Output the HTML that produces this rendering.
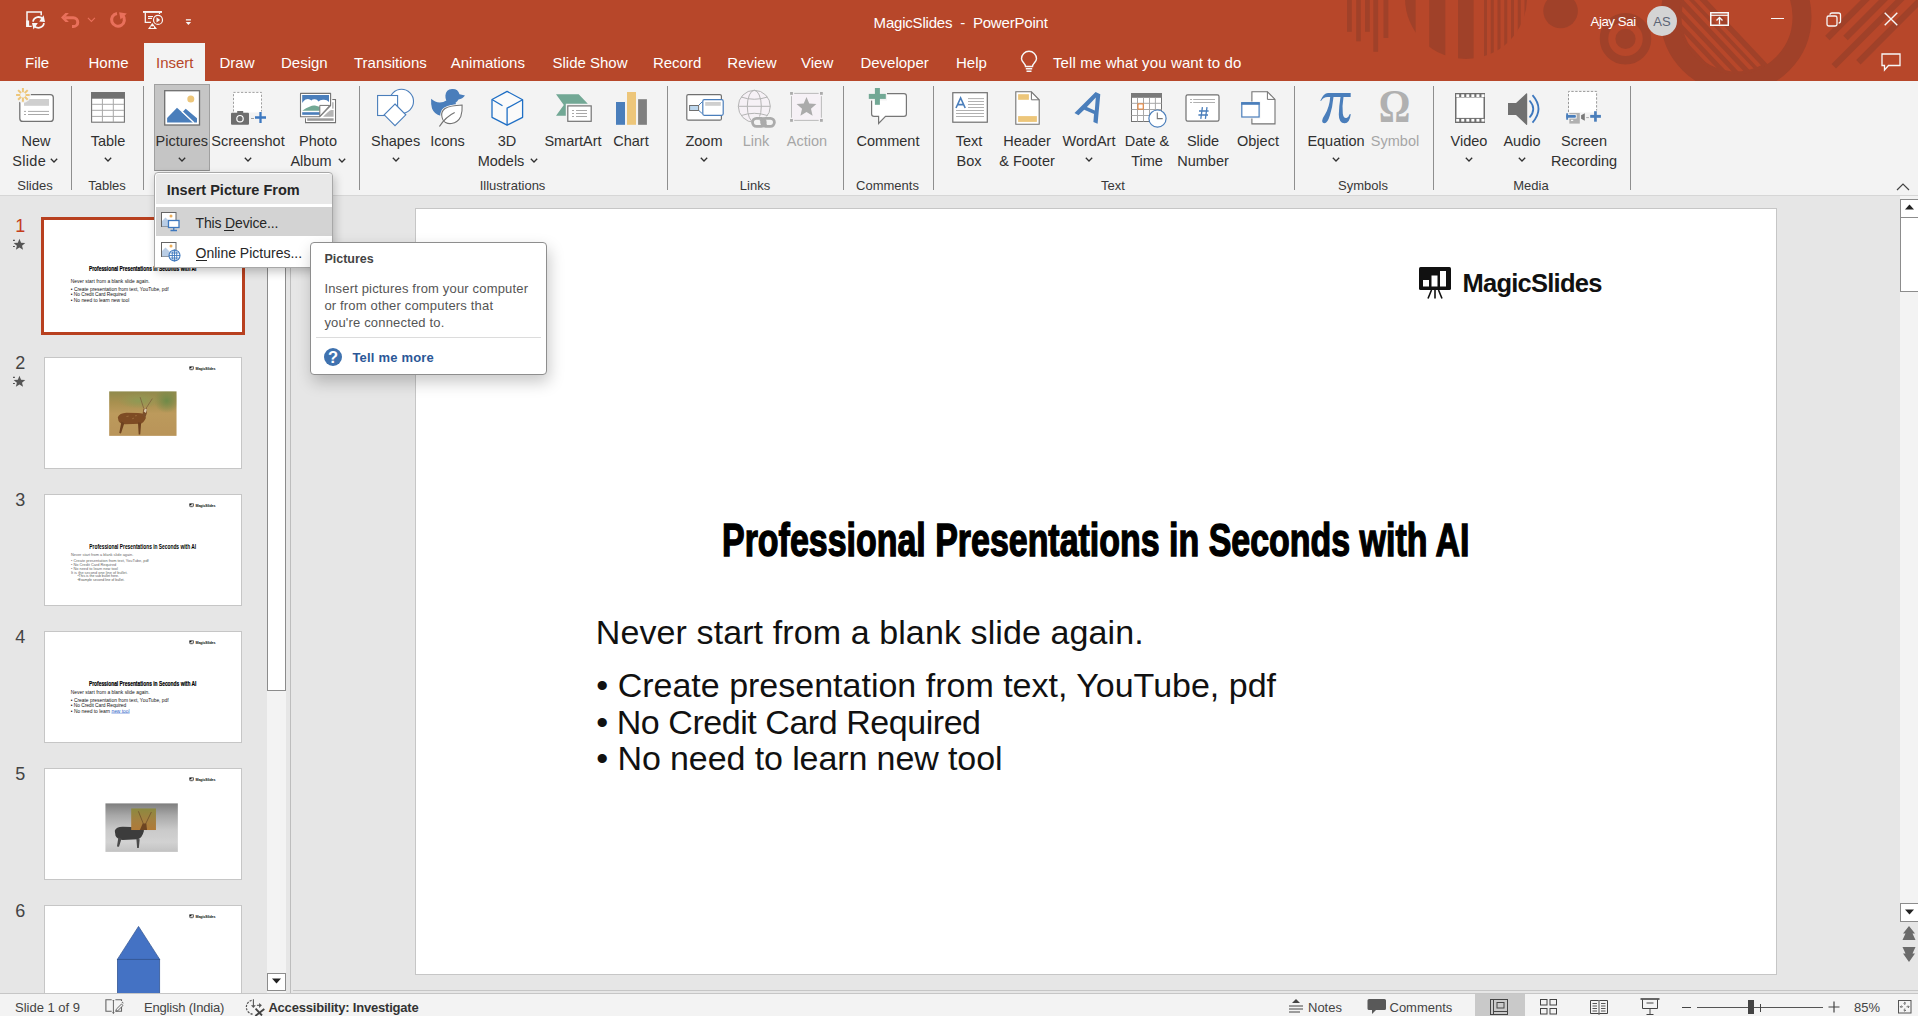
<!DOCTYPE html>
<html><head><meta charset="utf-8"><title>MagicSlides - PowerPoint</title>
<style>
html,body{margin:0;padding:0;}
body{width:1918px;height:1016px;overflow:hidden;position:relative;background:#E6E6E6;font-family:"Liberation Sans", sans-serif;}
.t{position:absolute;white-space:nowrap;}
.r{position:absolute;}
.s{position:absolute;overflow:visible;}
</style></head><body>

<div class="r" style="left:0px;top:0px;width:1918px;height:81px;background:#B7472A;"></div>
<svg class="s" style="left:0px;top:0px;overflow:hidden;" width="1918" height="81" viewBox="0 0 1918 81"><g fill="#A04129"><rect x="1347" y="0" width="4.8" height="31.8"/><rect x="1356.2" y="0" width="4.6" height="41.3"/><rect x="1365" y="0" width="4.8" height="31.8"/><rect x="1373.3" y="0" width="4.8" height="51.8"/><rect x="1383.5" y="0" width="4.8" height="38"/><clipPath id="hd"><circle cx="1466" cy="-2" r="61"/></clipPath><g clip-path="url(#hd)"><rect x="1400" y="0" width="15.6" height="70"/><rect x="1429.2" y="0" width="16.1" height="70"/><rect x="1458" y="0" width="15.6" height="70"/><rect x="1484.00" y="0" width="3" height="70"/><rect x="1490.75" y="0" width="3" height="70"/><rect x="1497.50" y="0" width="3" height="70"/><rect x="1504.25" y="0" width="3" height="70"/><rect x="1511.00" y="0" width="3" height="70"/><rect x="1517.75" y="0" width="3" height="70"/><rect x="1524.50" y="0" width="3" height="70"/><rect x="1531.25" y="0" width="3" height="70"/></g><circle cx="1560.6" cy="11" r="17.3"/><circle cx="1625.5" cy="38.8" r="21.5" fill="none" stroke="#A04129" stroke-width="8.5"/><circle cx="1625.5" cy="38.8" r="10.1"/><circle cx="1736" cy="17" r="66" fill="none" stroke="#A04129" stroke-width="19"/><clipPath id="rc"><circle cx="1736" cy="17" r="57"/></clipPath><clipPath id="rc2"><circle cx="1736" cy="17" r="54.5"/></clipPath><g clip-path="url(#rc)"><polygon points="1600,-10 1697.6,-10 1784.4,82 1600,82"/></g><g clip-path="url(#rc2)" fill="#B7472A"><polygon points="1684.6,-10 1690.1,-10 1793.8,100 1788.3,100"/><polygon points="1674.1,-10 1679.6,-10 1783.3,100 1777.8,100"/><polygon points="1661.6,-10 1667.1,-10 1770.8,100 1765.3,100"/><polygon points="1649.6,-10 1655.1,-10 1758.8,100 1753.3,100"/><polygon points="1637.6,-10 1643.1,-10 1746.8,100 1741.3,100"/></g><line x1="1827.4" y1="37.9" x2="1947.4" y2="-82.1" stroke="#A04129" stroke-width="6.3"/><line x1="1845.5" y1="37.9" x2="1965.5" y2="-82.1" stroke="#A04129" stroke-width="6.3"/><line x1="1833.8" y1="66.2" x2="1953.8" y2="-53.8" stroke="#A04129" stroke-width="6.3"/><line x1="1858.4" y1="62.2" x2="1978.4" y2="-57.8" stroke="#A04129" stroke-width="6.3"/></g></svg>
<svg class="s" style="left:0px;top:0px;" width="200" height="40" viewBox="0 0 200 40"><path d="M27 26.2 V12 H41.2 V15.3" fill="none" stroke="#F7F7F7" stroke-width="1.5"/><rect x="26.2" y="20.5" width="2.9" height="6.4" fill="#F7F7F7"/><rect x="26.2" y="25.7" width="5.5" height="1.3" fill="#F7F7F7"/><path d="M33 21.6 A5.6 5.6 0 0 1 43.2 19.6" fill="none" stroke="#F7F7F7" stroke-width="1.8"/><path d="M43.6 15.2 L45 21.9 L39.2 21.6 Z" fill="#F7F7F7"/><path d="M44 23.2 A5.6 5.6 0 0 1 33.8 25.2" fill="none" stroke="#F7F7F7" stroke-width="1.8"/><path d="M32 23.1 L37.8 23.1 L33.5 29.6 Z" fill="#F7F7F7"/><path d="M61 17.6 L65.4 13.1 H68.9 L64.6 17.6 L68.9 22.0 H65.4 Z" fill="#E9705B"/><path d="M65 17.7 H73.3 A4.45 4.45 0 0 1 73.3 26.6 H72" fill="none" stroke="#E9705B" stroke-width="3"/><path d="M87.9 17.9 L91.4 21.4 L94.9 17.9" fill="none" stroke="#E9705B" stroke-width="1.1"/><path d="M117 13.5 A6.4 6.4 0 1 0 122.6 15.4" fill="none" stroke="#E9705B" stroke-width="3.1"/><path d="M119.1 12.2 L126.8 13.6 L120.5 19.4 Z" fill="#E9705B"/><rect x="143" y="11" width="19" height="1.9" fill="#F7F7F7"/><path d="M145.3 12.5 V22.3 H151" fill="none" stroke="#F7F7F7" stroke-width="1.3"/><path d="M159.5 12.5 V14" stroke="#F7F7F7" stroke-width="1.2"/><path d="M148 16.5 H153 M148 18.4 H152" stroke="#F7F7F7" stroke-width="1.2"/><circle cx="158" cy="19.9" r="4.5" fill="#B7472A" stroke="#F7F7F7" stroke-width="1.2"/><path d="M156.5 17.2 L160.2 19.9 L156.5 22.6 Z" fill="#F7F7F7"/><path d="M152.3 23 L148 28.9 H157 Z" fill="#F7F7F7"/><path d="M150.6 26.3 H154 V28 H150.6 Z" fill="#B7472A"/><rect x="185.9" y="19.2" width="5" height="1.3" fill="#F7F7F7"/><path d="M185.7 22.1 H191.1 L188.4 25 Z" fill="#F7F7F7"/></svg>
<div class="t" style="font-size:15px;line-height:15px;color:#FFFFFF;font-weight:400;font-family:'Liberation Sans', sans-serif;top:14.70px;left:873.6px;white-space:pre;letter-spacing:-0.2px;">MagicSlides  -  PowerPoint</div>
<div class="t" style="font-size:13.2px;line-height:13.2px;color:#FFFFFF;font-weight:400;font-family:'Liberation Sans', sans-serif;top:14.63px;left:1590.5px;letter-spacing:-0.4px;">Ajay Sai</div>
<div class="r" style="left:1647px;top:6px;width:30px;height:30px;border-radius:50%;background:#D4D4D4;"></div>
<div class="t" style="font-size:13px;line-height:13px;color:#5C6475;font-weight:400;font-family:'Liberation Sans', sans-serif;top:15.00px;left:1362px;width:600px;text-align:center;">AS</div>
<svg class="s" style="left:1710px;top:12px;" width="19" height="14" viewBox="0 0 19 14">
<rect x="0.75" y="0.75" width="17.5" height="12.5" fill="none" stroke="#F7F7F7" stroke-width="1.5"/>
<path d="M0.75 3.3 H18.25" stroke="#F7F7F7" stroke-width="1.2"/>
<path d="M9.5 12.5 V5.5 M6.5 8.5 L9.5 5.5 L12.5 8.5" fill="none" stroke="#F7F7F7" stroke-width="1.3"/>
</svg>
<div class="r" style="left:1771px;top:17.5px;width:13px;height:1.3px;background:#F7F7F7;"></div>
<svg class="s" style="left:1826px;top:12px;" width="16" height="15" viewBox="0 0 16 15">
<rect x="1" y="4" width="10" height="10" rx="1.8" fill="none" stroke="#F7F7F7" stroke-width="1.3"/>
<path d="M4 2.8 Q4 1 6 1 H12.5 Q14.5 1 14.5 3 V9 Q14.5 11 12.6 11" fill="none" stroke="#F7F7F7" stroke-width="1.3"/>
</svg>
<svg class="s" style="left:1884px;top:12px;" width="14" height="14" viewBox="0 0 14 14"><path d="M0.7 0.7 L13.3 13.3 M13.3 0.7 L0.7 13.3" stroke="#F7F7F7" stroke-width="1.4"/></svg>
<svg class="s" style="left:1881px;top:53px;" width="20" height="19" viewBox="0 0 20 19"><path d="M1 1 H19 V12.5 H7.5 L3.5 17 V12.5 H1 Z" fill="none" stroke="#F7F7F7" stroke-width="1.3" stroke-linejoin="miter"/></svg>
<div class="r" style="left:144px;top:43px;width:61px;height:38px;background:#F3F3F3;"></div>
<div class="t" style="font-size:15px;line-height:15px;color:#FFFFFF;font-weight:400;font-family:'Liberation Sans', sans-serif;top:55.30px;left:25px;">File</div>
<div class="t" style="font-size:15px;line-height:15px;color:#FFFFFF;font-weight:400;font-family:'Liberation Sans', sans-serif;top:55.30px;left:88.5px;">Home</div>
<div class="t" style="font-size:15px;line-height:15px;color:#B7472A;font-weight:400;font-family:'Liberation Sans', sans-serif;top:55.30px;left:156px;">Insert</div>
<div class="t" style="font-size:15px;line-height:15px;color:#FFFFFF;font-weight:400;font-family:'Liberation Sans', sans-serif;top:55.30px;left:219.5px;">Draw</div>
<div class="t" style="font-size:15px;line-height:15px;color:#FFFFFF;font-weight:400;font-family:'Liberation Sans', sans-serif;top:55.30px;left:281px;">Design</div>
<div class="t" style="font-size:15px;line-height:15px;color:#FFFFFF;font-weight:400;font-family:'Liberation Sans', sans-serif;top:55.30px;left:354px;">Transitions</div>
<div class="t" style="font-size:15px;line-height:15px;color:#FFFFFF;font-weight:400;font-family:'Liberation Sans', sans-serif;top:55.30px;left:450.75px;">Animations</div>
<div class="t" style="font-size:15px;line-height:15px;color:#FFFFFF;font-weight:400;font-family:'Liberation Sans', sans-serif;top:55.30px;left:552.5px;">Slide Show</div>
<div class="t" style="font-size:15px;line-height:15px;color:#FFFFFF;font-weight:400;font-family:'Liberation Sans', sans-serif;top:55.30px;left:652.9px;">Record</div>
<div class="t" style="font-size:15px;line-height:15px;color:#FFFFFF;font-weight:400;font-family:'Liberation Sans', sans-serif;top:55.30px;left:727.3px;">Review</div>
<div class="t" style="font-size:15px;line-height:15px;color:#FFFFFF;font-weight:400;font-family:'Liberation Sans', sans-serif;top:55.30px;left:801px;">View</div>
<div class="t" style="font-size:15px;line-height:15px;color:#FFFFFF;font-weight:400;font-family:'Liberation Sans', sans-serif;top:55.30px;left:860.4px;">Developer</div>
<div class="t" style="font-size:15px;line-height:15px;color:#FFFFFF;font-weight:400;font-family:'Liberation Sans', sans-serif;top:55.30px;left:956px;">Help</div>
<svg class="s" style="left:1020px;top:52.3px;" width="18" height="22" viewBox="0 0 18 22">
<path d="M5.5 14.5 C5.5 11.5 1.5 10 1.5 6.8 A7.5 7.5 0 0 1 16.5 6.8 C16.5 10 12.5 11.5 12.5 14.5 Z" fill="none" stroke="#F7F7F7" stroke-width="1.4"/>
<path d="M5.8 16.8 H12.2 M6.5 19.3 H11.5" stroke="#F7F7F7" stroke-width="1.4"/>
</svg>
<div class="t" style="font-size:15px;line-height:15px;color:#FFFFFF;font-weight:400;font-family:'Liberation Sans', sans-serif;top:54.50px;left:1053px;letter-spacing:0.12px;">Tell me what you want to do</div>
<div class="r" style="left:0px;top:81px;width:1918px;height:114px;background:#F3F3F3;"></div>
<div class="r" style="left:0px;top:195px;width:1918px;height:1px;background:#D6D6D6;"></div>
<div class="r" style="left:71px;top:86px;width:1px;height:104px;background:#8E8E8E;"></div>
<div class="r" style="left:143px;top:86px;width:1px;height:104px;background:#8E8E8E;"></div>
<div class="r" style="left:359px;top:86px;width:1px;height:104px;background:#8E8E8E;"></div>
<div class="r" style="left:667px;top:86px;width:1px;height:104px;background:#8E8E8E;"></div>
<div class="r" style="left:843px;top:86px;width:1px;height:104px;background:#8E8E8E;"></div>
<div class="r" style="left:933px;top:86px;width:1px;height:104px;background:#8E8E8E;"></div>
<div class="r" style="left:1294px;top:86px;width:1px;height:104px;background:#8E8E8E;"></div>
<div class="r" style="left:1433px;top:86px;width:1px;height:104px;background:#8E8E8E;"></div>
<div class="r" style="left:1630px;top:86px;width:1px;height:104px;background:#8E8E8E;"></div>
<div class="r" style="left:154px;top:84px;width:56px;height:87px;background:#C5C5C5;box-sizing:border-box;border:1px solid #A0A0A0;border-bottom-color:#8C8C8C;"></div>
<div class="t" style="font-size:14.5px;line-height:14.5px;color:#303030;font-weight:400;font-family:'Liberation Sans', sans-serif;top:134.03px;left:-264px;width:600px;text-align:center;">New</div>
<div class="t" style="font-size:14.5px;line-height:14.5px;color:#303030;font-weight:400;font-family:'Liberation Sans', sans-serif;top:153.73px;left:-270.8px;width:600px;text-align:center;letter-spacing:0.3px;">Slide</div>
<svg class="s" style="left:49.5px;top:157.7px;" width="8" height="5" viewBox="0 0 8 5"><path d="M0.8 0.8 L4 4 L7.2 0.8" fill="none" stroke="#303030" stroke-width="1.3"/></svg>
<div class="t" style="font-size:13px;line-height:13px;color:#383838;font-weight:400;font-family:'Liberation Sans', sans-serif;top:178.70px;left:-265px;width:600px;text-align:center;">Slides</div>
<div class="t" style="font-size:14.5px;line-height:14.5px;color:#303030;font-weight:400;font-family:'Liberation Sans', sans-serif;top:134.03px;left:-192px;width:600px;text-align:center;">Table</div>
<svg class="s" style="left:104px;top:157.0px;" width="8" height="5" viewBox="0 0 8 5"><path d="M0.8 0.8 L4 4 L7.2 0.8" fill="none" stroke="#303030" stroke-width="1.3"/></svg>
<div class="t" style="font-size:13px;line-height:13px;color:#383838;font-weight:400;font-family:'Liberation Sans', sans-serif;top:178.70px;left:-193px;width:600px;text-align:center;">Tables</div>
<div class="t" style="font-size:14.5px;line-height:14.5px;color:#303030;font-weight:400;font-family:'Liberation Sans', sans-serif;top:134.03px;left:-118.19999999999999px;width:600px;text-align:center;">Pictures</div>
<svg class="s" style="left:177.8px;top:157.0px;" width="8" height="5" viewBox="0 0 8 5"><path d="M0.8 0.8 L4 4 L7.2 0.8" fill="none" stroke="#303030" stroke-width="1.3"/></svg>
<div class="t" style="font-size:14.5px;line-height:14.5px;color:#303030;font-weight:400;font-family:'Liberation Sans', sans-serif;top:134.03px;left:-52px;width:600px;text-align:center;">Screenshot</div>
<svg class="s" style="left:244px;top:157.0px;" width="8" height="5" viewBox="0 0 8 5"><path d="M0.8 0.8 L4 4 L7.2 0.8" fill="none" stroke="#303030" stroke-width="1.3"/></svg>
<div class="t" style="font-size:14.5px;line-height:14.5px;color:#303030;font-weight:400;font-family:'Liberation Sans', sans-serif;top:134.03px;left:18px;width:600px;text-align:center;">Photo</div>
<div class="t" style="font-size:14.5px;line-height:14.5px;color:#303030;font-weight:400;font-family:'Liberation Sans', sans-serif;top:153.73px;left:11px;width:600px;text-align:center;">Album</div>
<svg class="s" style="left:337.5px;top:157.7px;" width="8" height="5" viewBox="0 0 8 5"><path d="M0.8 0.8 L4 4 L7.2 0.8" fill="none" stroke="#303030" stroke-width="1.3"/></svg>
<div class="t" style="font-size:14.5px;line-height:14.5px;color:#303030;font-weight:400;font-family:'Liberation Sans', sans-serif;top:134.03px;left:95.60000000000002px;width:600px;text-align:center;">Shapes</div>
<svg class="s" style="left:391.6px;top:157.0px;" width="8" height="5" viewBox="0 0 8 5"><path d="M0.8 0.8 L4 4 L7.2 0.8" fill="none" stroke="#303030" stroke-width="1.3"/></svg>
<div class="t" style="font-size:14.5px;line-height:14.5px;color:#303030;font-weight:400;font-family:'Liberation Sans', sans-serif;top:134.03px;left:147.5px;width:600px;text-align:center;">Icons</div>
<div class="t" style="font-size:14.5px;line-height:14.5px;color:#303030;font-weight:400;font-family:'Liberation Sans', sans-serif;top:134.03px;left:207px;width:600px;text-align:center;">3D</div>
<div class="t" style="font-size:14.5px;line-height:14.5px;color:#303030;font-weight:400;font-family:'Liberation Sans', sans-serif;top:153.73px;left:201px;width:600px;text-align:center;">Models</div>
<svg class="s" style="left:529.5px;top:157.7px;" width="8" height="5" viewBox="0 0 8 5"><path d="M0.8 0.8 L4 4 L7.2 0.8" fill="none" stroke="#303030" stroke-width="1.3"/></svg>
<div class="t" style="font-size:14.5px;line-height:14.5px;color:#303030;font-weight:400;font-family:'Liberation Sans', sans-serif;top:134.03px;left:273px;width:600px;text-align:center;">SmartArt</div>
<div class="t" style="font-size:14.5px;line-height:14.5px;color:#303030;font-weight:400;font-family:'Liberation Sans', sans-serif;top:134.03px;left:331px;width:600px;text-align:center;">Chart</div>
<div class="t" style="font-size:13px;line-height:13px;color:#383838;font-weight:400;font-family:'Liberation Sans', sans-serif;top:178.70px;left:212.5px;width:600px;text-align:center;">Illustrations</div>
<div class="t" style="font-size:14.5px;line-height:14.5px;color:#303030;font-weight:400;font-family:'Liberation Sans', sans-serif;top:134.03px;left:404px;width:600px;text-align:center;">Zoom</div>
<svg class="s" style="left:700px;top:157.0px;" width="8" height="5" viewBox="0 0 8 5"><path d="M0.8 0.8 L4 4 L7.2 0.8" fill="none" stroke="#303030" stroke-width="1.3"/></svg>
<div class="t" style="font-size:14.5px;line-height:14.5px;color:#A6A6A6;font-weight:400;font-family:'Liberation Sans', sans-serif;top:134.03px;left:456px;width:600px;text-align:center;">Link</div>
<div class="t" style="font-size:14.5px;line-height:14.5px;color:#A6A6A6;font-weight:400;font-family:'Liberation Sans', sans-serif;top:134.03px;left:507px;width:600px;text-align:center;">Action</div>
<div class="t" style="font-size:13px;line-height:13px;color:#383838;font-weight:400;font-family:'Liberation Sans', sans-serif;top:178.70px;left:455px;width:600px;text-align:center;">Links</div>
<div class="t" style="font-size:14.5px;line-height:14.5px;color:#303030;font-weight:400;font-family:'Liberation Sans', sans-serif;top:134.03px;left:588px;width:600px;text-align:center;">Comment</div>
<div class="t" style="font-size:13px;line-height:13px;color:#383838;font-weight:400;font-family:'Liberation Sans', sans-serif;top:178.70px;left:587.5px;width:600px;text-align:center;">Comments</div>
<div class="t" style="font-size:14.5px;line-height:14.5px;color:#303030;font-weight:400;font-family:'Liberation Sans', sans-serif;top:134.03px;left:669px;width:600px;text-align:center;">Text</div>
<div class="t" style="font-size:14.5px;line-height:14.5px;color:#303030;font-weight:400;font-family:'Liberation Sans', sans-serif;top:153.73px;left:669px;width:600px;text-align:center;">Box</div>
<div class="t" style="font-size:14.5px;line-height:14.5px;color:#303030;font-weight:400;font-family:'Liberation Sans', sans-serif;top:134.03px;left:727px;width:600px;text-align:center;">Header</div>
<div class="t" style="font-size:14.5px;line-height:14.5px;color:#303030;font-weight:400;font-family:'Liberation Sans', sans-serif;top:153.73px;left:727px;width:600px;text-align:center;">&amp; Footer</div>
<div class="t" style="font-size:14.5px;line-height:14.5px;color:#303030;font-weight:400;font-family:'Liberation Sans', sans-serif;top:134.03px;left:789px;width:600px;text-align:center;">WordArt</div>
<svg class="s" style="left:1085px;top:157.0px;" width="8" height="5" viewBox="0 0 8 5"><path d="M0.8 0.8 L4 4 L7.2 0.8" fill="none" stroke="#303030" stroke-width="1.3"/></svg>
<div class="t" style="font-size:14.5px;line-height:14.5px;color:#303030;font-weight:400;font-family:'Liberation Sans', sans-serif;top:134.03px;left:847px;width:600px;text-align:center;">Date &amp;</div>
<div class="t" style="font-size:14.5px;line-height:14.5px;color:#303030;font-weight:400;font-family:'Liberation Sans', sans-serif;top:153.73px;left:847px;width:600px;text-align:center;">Time</div>
<div class="t" style="font-size:14.5px;line-height:14.5px;color:#303030;font-weight:400;font-family:'Liberation Sans', sans-serif;top:134.03px;left:903px;width:600px;text-align:center;">Slide</div>
<div class="t" style="font-size:14.5px;line-height:14.5px;color:#303030;font-weight:400;font-family:'Liberation Sans', sans-serif;top:153.73px;left:903px;width:600px;text-align:center;">Number</div>
<div class="t" style="font-size:14.5px;line-height:14.5px;color:#303030;font-weight:400;font-family:'Liberation Sans', sans-serif;top:134.03px;left:958px;width:600px;text-align:center;">Object</div>
<div class="t" style="font-size:13px;line-height:13px;color:#383838;font-weight:400;font-family:'Liberation Sans', sans-serif;top:178.70px;left:813px;width:600px;text-align:center;">Text</div>
<div class="t" style="font-size:14.5px;line-height:14.5px;color:#303030;font-weight:400;font-family:'Liberation Sans', sans-serif;top:134.03px;left:1036px;width:600px;text-align:center;">Equation</div>
<svg class="s" style="left:1332px;top:157.0px;" width="8" height="5" viewBox="0 0 8 5"><path d="M0.8 0.8 L4 4 L7.2 0.8" fill="none" stroke="#303030" stroke-width="1.3"/></svg>
<div class="t" style="font-size:14.5px;line-height:14.5px;color:#A6A6A6;font-weight:400;font-family:'Liberation Sans', sans-serif;top:134.03px;left:1095px;width:600px;text-align:center;">Symbol</div>
<div class="t" style="font-size:13px;line-height:13px;color:#383838;font-weight:400;font-family:'Liberation Sans', sans-serif;top:178.70px;left:1063px;width:600px;text-align:center;">Symbols</div>
<div class="t" style="font-size:14.5px;line-height:14.5px;color:#303030;font-weight:400;font-family:'Liberation Sans', sans-serif;top:134.03px;left:1169px;width:600px;text-align:center;">Video</div>
<svg class="s" style="left:1465px;top:157.0px;" width="8" height="5" viewBox="0 0 8 5"><path d="M0.8 0.8 L4 4 L7.2 0.8" fill="none" stroke="#303030" stroke-width="1.3"/></svg>
<div class="t" style="font-size:14.5px;line-height:14.5px;color:#303030;font-weight:400;font-family:'Liberation Sans', sans-serif;top:134.03px;left:1222px;width:600px;text-align:center;">Audio</div>
<svg class="s" style="left:1518px;top:157.0px;" width="8" height="5" viewBox="0 0 8 5"><path d="M0.8 0.8 L4 4 L7.2 0.8" fill="none" stroke="#303030" stroke-width="1.3"/></svg>
<div class="t" style="font-size:14.5px;line-height:14.5px;color:#303030;font-weight:400;font-family:'Liberation Sans', sans-serif;top:134.03px;left:1284px;width:600px;text-align:center;">Screen</div>
<div class="t" style="font-size:14.5px;line-height:14.5px;color:#303030;font-weight:400;font-family:'Liberation Sans', sans-serif;top:153.73px;left:1284px;width:600px;text-align:center;">Recording</div>
<div class="t" style="font-size:13px;line-height:13px;color:#383838;font-weight:400;font-family:'Liberation Sans', sans-serif;top:178.70px;left:1231px;width:600px;text-align:center;">Media</div>
<svg class="s" style="left:1896px;top:183px;" width="14" height="8" viewBox="0 0 14 8"><path d="M1 7 L7 1 L13 7" fill="none" stroke="#444" stroke-width="1.2"/></svg>
<svg class="s" style="left:0px;top:0px;pointer-events:none;" width="1918" height="200" viewBox="0 0 1918 200"><rect x="19.8" y="94.6" width="33.5" height="26.8" rx="3" fill="#fff" stroke="#737373" stroke-width="1.3"/><rect x="24" y="99" width="25" height="6.8" fill="#CFCFCF"/><path d="M24 111.4 H26 M28 111.4 H49 M24 114.5 H26 M28 114.5 H49" stroke="#A8A8A8" stroke-width="1"/><circle cx="22.9" cy="94.9" r="8" fill="#F3F3F3"/><path d="M25.50 94.90 L29.70 94.90 M24.74 96.74 L27.71 99.71 M22.90 97.50 L22.90 101.70 M21.06 96.74 L18.09 99.71 M20.30 94.90 L16.10 94.90 M21.06 93.06 L18.09 90.09 M22.90 92.30 L22.90 88.10 M24.74 93.06 L27.71 90.09 " stroke="#EDC67A" stroke-width="2"/><rect x="91.6" y="92.6" width="32.8" height="29.6" fill="#fff" stroke="#737373" stroke-width="1.1"/><rect x="91.1" y="92.1" width="33.8" height="6.6" fill="#707070"/><path d="M102.4 98.7 V122 M113.3 98.7 V122 M92 104.3 H124 M92 110.3 H124 M92 116.4 H124" stroke="#A8A8A8" stroke-width="1"/><rect x="164.7" y="90.7" width="34.8" height="34.3" fill="#fff" stroke="#6E6E6E" stroke-width="1.3"/><circle cx="190.8" cy="98.9" r="3.5" fill="#EDC67A"/><path d="M167.1 122.6 V118 L177 107.8 L193.1 122.6 Z" fill="#4A7EBB"/><path d="M182.6 112 L185.7 108.8 L197 118.2 V122.6 H193.4 Z" fill="#4A7EBB"/><path d="M182 111.5 L194 122.8" stroke="#fff" stroke-width="1.2"/><rect x="233.5" y="92.4" width="28" height="20" fill="#fff"/><path d="M233.5 111.5 V92.4 H261.5 V111.5" fill="none" stroke="#A0A0A0" stroke-width="1" stroke-dasharray="2.2 1.6"/><rect x="231" y="112.7" width="18" height="12" rx="1" fill="#6E6E6E"/><rect x="237.2" y="111" width="6" height="3" fill="#6E6E6E"/><circle cx="240" cy="118.7" r="3.2" fill="none" stroke="#fff" stroke-width="1.2"/><path d="M251 118.5 H254" stroke="#A0A0A0" stroke-width="1"/><path d="M255 117.5 H266 M260.5 112 V123" stroke="#3D78C0" stroke-width="2.3"/><path d="M305.55 118.3 V122.6 H335.5 V99.6 H332.3" fill="#fff" stroke="#737373" stroke-width="1.1"/><rect x="306.1" y="100.2" width="28.8" height="21.8" fill="#fff"/><rect x="307.2" y="118.3" width="26.4" height="2.5" fill="#9A9A9A"/><path d="M323 116.7 L328 112 Q330 110.1 331.5 110.1 H333.6 V116.7 Z" fill="#B4B4B4"/><rect x="332.1" y="102.2" width="1.5" height="6.4" fill="#B4B4B4"/><path d="M300.5 93.4 H330.6 V105.6 L319.8 116.7 H300.5 Z" fill="#fff" stroke="#737373" stroke-width="1.1" stroke-linejoin="round"/><path d="M302.2 95.1 H329 V102 Q327 99.8 324 99.8 Q320 99.5 318.5 101.5 Q317 99 314.5 99.2 Q312 99.3 311.5 100.5 Q309 98 305.5 99.5 Q303.5 100.5 302.2 103 Z" fill="#4A7EBB"/><path d="M302.2 110.7 Q306 107.8 310 106.5 Q312.5 105.2 315 105.6 Q318 106.3 319.8 107 V110.7 Z" fill="#72A895"/><rect x="302.2" y="112.2" width="17.6" height="2.6" fill="#4A7EBB"/><path d="M319.8 116.2 V105.4 H329.8 Z" fill="#fff" stroke="#737373" stroke-width="1" stroke-linejoin="round"/><circle cx="401.5" cy="101.3" r="12" fill="#fff" stroke="#4A7EBB" stroke-width="1.1"/><rect x="377.6" y="95.5" width="20" height="20" fill="#fff" stroke="#4A7EBB" stroke-width="1.1"/><path d="M395 104 L405.8 114.8 L395 125.6 L384.2 114.8 Z" fill="#fff" stroke="#4A7EBB" stroke-width="1.1"/><path d="M431.1 98.8 Q435 102.5 439.8 102.5 Q443.5 102.3 446.3 100.5 Q445.2 98 445.4 95.5 A7.2 7.2 0 0 1 459.5 94.3 L465 95.5 Q462.5 99 458.5 99.5 Q457.5 101.5 455.5 102.8 L456.2 104.5 Q449 105 444.5 108.5 Q441 111.5 440.5 115.8 Q434.5 114.5 432 108.5 Q430.8 104 431.1 98.8 Z" fill="#4A7EBB"/><path d="M462.1 105 Q450 105.5 445 108.5 Q441 111.5 441.8 116 Q442.5 121 445.5 122.5 Q448.5 124 451.5 123.5 Q458 122.5 460.8 116.5 Q462.5 112 462.1 105 Z" fill="#fff" stroke="#F8F8F8" stroke-width="2.6"/><path d="M462.1 105 Q450 105.5 445 108.5 Q441 111.5 441.8 116 Q442.5 121 445.5 122.5 Q448.5 124 451.5 123.5 Q458 122.5 460.8 116.5 Q462.5 112 462.1 105 Z" fill="#fff" stroke="#737373" stroke-width="1.1"/><path d="M439.4 126.5 Q446 116.5 454.7 112.5" fill="none" stroke="#737373" stroke-width="1.2"/><path d="M507.1 91.4 L522.6 99.7 V117.3 L507.1 125.2 L492 117.3 V99.5 Z" fill="#FAFAFA" stroke="#1F6FC5" stroke-width="1.3" stroke-linejoin="round"/><path d="M522.6 99.7 L507.1 108.2 V125.2 M492 99.5 L502.5 105.8" fill="none" stroke="#1F6FC5" stroke-width="1.3"/><path d="M556 94.2 H578.7 L587.8 103.8 H565.8 V115.65 H556 L563.8 104.9 Z" fill="#72A895"/><rect x="567.8" y="105.9" width="23.4" height="15.4" fill="#fff" stroke="#737373" stroke-width="1.2"/><path d="M572 110.5 H574 M576 110.5 H587 M572 113.5 H574 M576 113.5 H587 M572 116.5 H574 M576 116.5 H587" stroke="#A8A8A8" stroke-width="1"/><rect x="616" y="102" width="9" height="22.8" fill="#4A7EBB"/><rect x="627" y="92" width="9" height="32.8" fill="#EDC67A"/><rect x="638.1" y="99.2" width="8.8" height="25.6" fill="#7F7F7F"/><rect x="686.8" y="94.6" width="34.6" height="25.6" rx="1.5" fill="#fff" stroke="#707070" stroke-width="1.2"/><path d="M698.8 105.2 L702.5 101.5 M698.8 110.5 L702.5 113.8" stroke="#4A7EBB" stroke-width="1"/><rect x="702.8" y="99.7" width="20.4" height="15.6" rx="1.5" fill="#fff" stroke="#4A7EBB" stroke-width="1.2"/><rect x="705.2" y="102" width="15.6" height="3.8" fill="#CFCFCF"/><rect x="689.6" y="105.5" width="9" height="5" fill="#BDD7EE" stroke="#707070" stroke-width="1"/><circle cx="754.3" cy="106.3" r="16" fill="#F6F1F6" stroke="#B4B4B4" stroke-width="1"/><ellipse cx="754.3" cy="106.3" rx="7" ry="16" fill="none" stroke="#B4B4B4" stroke-width="1"/><path d="M738.3 106.3 H770.3 M741 97 Q754.3 101.5 767.6 97 M741 115.6 Q754.3 111 767.6 115.6" fill="none" stroke="#B4B4B4" stroke-width="1"/><path d="M750 127 L753 116.5 H778 V130 H750 Z" fill="#F3F3F3"/><rect x="752.5" y="118.4" width="12.8" height="7.9" rx="3.95" fill="none" stroke="#ABABAB" stroke-width="2.8"/><rect x="761.6" y="118.4" width="12.8" height="7.9" rx="3.95" fill="none" stroke="#ABABAB" stroke-width="2.8"/><path d="M760.5 119.2 L766 125.5" stroke="#ABABAB" stroke-width="2.8"/><rect x="791.5" y="93.4" width="29.9" height="27" fill="#F6F1F6"/><path d="M794.2 93.4 H818.7 M794.2 120.4 H818.7 M791.5 96.2 V117.7 M821.4 96.2 V117.7" stroke="#B4B4B4" stroke-width="0.9"/><rect x="790.1" y="92.0" width="2.8" height="2.8" fill="#ABABAB"/><rect x="820.0" y="92.0" width="2.8" height="2.8" fill="#ABABAB"/><rect x="790.1" y="119.0" width="2.8" height="2.8" fill="#ABABAB"/><rect x="820.0" y="119.0" width="2.8" height="2.8" fill="#ABABAB"/><polygon points="806.50,96.90 809.26,103.50 816.39,104.09 810.97,108.75 812.61,115.71 806.50,112.00 800.39,115.71 802.03,108.75 796.61,104.09 803.74,103.50" fill="#ABABAB"/><path d="M874 93.6 H904 Q906.4 93.6 906.4 96 V114 Q906.4 116.4 904 116.4 H885.5 L878.6 123.5 V116.4 H874 Q871.6 116.4 871.6 114 V96 Q871.6 93.6 874 93.6 Z" fill="#fff" stroke="#767676" stroke-width="1.2"/><rect x="868" y="92.6" width="19" height="8" fill="#F3F3F3"/><rect x="868.8" y="93.9" width="17" height="5" fill="#72A895"/><rect x="874.9" y="88" width="5" height="16.8" fill="#72A895"/><rect x="952.8" y="92.7" width="34.5" height="29.5" fill="#fff" stroke="#707070" stroke-width="1.2"/><path d="M956 108 L960.6 98 L965.2 108 M957.6 104.6 H963.6" fill="none" stroke="#4A7EBB" stroke-width="1.6"/><path d="M968 98.6 H984 M968 101.5 H984 M968 104.5 H984 M968 107.5 H984 M956 110.5 H984 M956 113.5 H984 M956 116.5 H984" stroke="#A8A8A8" stroke-width="0.9"/><path d="M1015.8 91.8 H1031.4 L1039.2 99.8 V124.3 H1015.8 Z" fill="#fff" stroke="#737373" stroke-width="1.1"/><path d="M1031.4 91.8 V99.8 H1039.2" fill="none" stroke="#737373" stroke-width="1"/><rect x="1018.1" y="94.2" width="10.8" height="5.6" fill="#EDC67A"/><rect x="1018.1" y="116.1" width="18.8" height="5.8" fill="#EDC67A"/><path d="M1074.5 113 L1095.6 91.9 L1100.3 94.3 L1097.6 123.8 L1093.4 121.9 L1094 114 L1084.2 109.7 L1078.5 115.2 Z M1095.8 97.4 L1086.9 106.9 L1094.8 110.4 Z" fill="#4A7EBB" fill-rule="evenodd"/><rect x="1131.5" y="93.5" width="30" height="28" fill="#fff" stroke="#737373" stroke-width="1"/><rect x="1131" y="93" width="31" height="4.8" fill="#7A7A7A"/><path d="M1137.5 97.8 V121.5 M1143.5 97.8 V121.5 M1149.5 97.8 V121.5 M1155.4 97.8 V121.5 M1131.5 103.3 H1161.5 M1131.5 109.5 H1161.5 M1131.5 115.5 H1161.5" stroke="#A8A8A8" stroke-width="1"/><rect x="1138" y="103.9" width="5.2" height="5.2" fill="#fff" stroke="#E97E2E" stroke-width="1"/><circle cx="1157.5" cy="118.6" r="8.6" fill="#fff" stroke="#4A7EBB" stroke-width="1.2"/><path d="M1157.3 112.4 V118.6 H1162.7" fill="none" stroke="#777" stroke-width="1.1"/><rect x="1186" y="94.9" width="33" height="26.3" rx="1.6" fill="#fff" stroke="#707070" stroke-width="1.2"/><path d="M1190 99.5 H1192 M1193.2 99.5 H1215 M1190 102.5 H1192 M1193.2 102.5 H1215" stroke="#A8A8A8" stroke-width="0.9"/><path d="M1202.4 107.2 L1200.8 118.8 M1207 107.2 L1205.4 118.8 M1199 111 H1208.6 M1198.4 115 H1208" stroke="#4A7EBB" stroke-width="1.3"/><path d="M1251.9 91.7 H1267.4 L1275 99.4 V123.9 H1251.9 Z" fill="#fff" stroke="#737373" stroke-width="1.1"/><path d="M1267.4 91.7 V99.4 H1275" fill="none" stroke="#737373" stroke-width="1"/><rect x="1240.5" y="101.5" width="20" height="17" fill="#F3F3F3"/><rect x="1241.8" y="102.8" width="17.3" height="14.2" fill="#fff" stroke="#4A7EBB" stroke-width="1.2"/><rect x="1241.2" y="102.2" width="18.5" height="2.6" fill="#4A7EBB"/><path d="M1320.3 100.8 Q1323.5 93.2 1328 93 H1350.7 V97 H1343.5 Q1342 106 1342.8 113.5 Q1343.5 118.5 1346.5 118 Q1348.5 117.5 1349.8 114 L1350.8 114.2 Q1349.5 123.5 1344.5 123.3 Q1338.8 123 1338.8 114.5 Q1339 106 1340.5 97 H1333.5 Q1332.5 107 1330 115 Q1327.5 123.3 1324.5 123.3 Q1322 123.2 1322.2 120.5 Q1322.5 118 1325 114.5 Q1329.5 107 1330.2 97 H1327.5 Q1323.5 97 1321 101 Z" fill="#4A7EBB"/><text x="1394.5" y="121.8" text-anchor="middle" font-family="Liberation Serif" font-size="47" font-weight="700" fill="#B0B0B0" transform="translate(1394.5 0) scale(0.84 1) translate(-1394.5 0)">Ω</text><rect x="1455" y="93" width="30" height="30" fill="#6E6E6E"/><rect x="1456.5" y="97.5" width="27" height="20.4" fill="#fff"/><rect x="1456.20" y="94.3" width="3" height="2.7" fill="#fff"/><rect x="1456.20" y="118.9" width="3" height="2.7" fill="#fff"/><rect x="1461.25" y="94.3" width="3" height="2.7" fill="#fff"/><rect x="1461.25" y="118.9" width="3" height="2.7" fill="#fff"/><rect x="1466.30" y="94.3" width="3" height="2.7" fill="#fff"/><rect x="1466.30" y="118.9" width="3" height="2.7" fill="#fff"/><rect x="1471.35" y="94.3" width="3" height="2.7" fill="#fff"/><rect x="1471.35" y="118.9" width="3" height="2.7" fill="#fff"/><rect x="1476.40" y="94.3" width="3" height="2.7" fill="#fff"/><rect x="1476.40" y="118.9" width="3" height="2.7" fill="#fff"/><rect x="1481.45" y="94.3" width="3" height="2.7" fill="#fff"/><rect x="1481.45" y="118.9" width="3" height="2.7" fill="#fff"/><path d="M1508 103 H1516 L1526.5 93.2 Q1527.2 93 1527.2 94 V124.3 Q1527.2 125.2 1526.5 125 L1516 115 H1508 Z" fill="#707070"/><path d="M1529.5 100.5 Q1537 109 1529.5 117.5 M1532.5 95.2 Q1544.5 109 1532.5 122.6" fill="none" stroke="#3E78BE" stroke-width="1.8"/><rect x="1568.5" y="91.4" width="28.1" height="21" fill="#fff"/><path d="M1568.5 112 V91.4 H1596.6 V110.5" fill="none" stroke="#999" stroke-width="1" stroke-dasharray="2.4 1.5"/><rect x="1566" y="112.3" width="15" height="12" fill="#F3F3F3"/><rect x="1569.3" y="113" width="10.5" height="10.6" fill="#B0B0B0"/><rect x="1568.6" y="114.4" width="8" height="4.1" fill="#fff"/><rect x="1571" y="119.8" width="2.2" height="1.1" fill="#fff"/><rect x="1566.2" y="113.3" width="1.9" height="6.4" fill="#4A7EBB"/><rect x="1566.2" y="115.1" width="9.7" height="2.7" rx="0.8" fill="#4A7EBB"/><path d="M1581.1 115.2 L1584.8 113.3 V120.7 L1581.1 118.8 Z" fill="#7A7A7A"/><path d="M1586.2 117.6 H1588.9" stroke="#A0A0A0" stroke-width="0.9"/><rect x="1590.2" y="114.9" width="10.7" height="2.9" fill="#4A7EBB"/><rect x="1594.1" y="111.2" width="2.7" height="10.5" fill="#4A7EBB"/></svg>
<div class="r" style="left:0px;top:196px;width:1918px;height:797px;background:#E6E6E6;"></div>
<div style="position:absolute;left:0;top:196px;width:291px;height:797px;overflow:hidden;">
<div class="r" style="left:41px;top:21px;width:204px;height:118px;background:#B8401F;"></div>
<div class="r" style="left:44px;top:24px;width:198px;height:112px;background:#fff;"></div>
<div class="r" style="left:45px;top:25px;width:196px;height:110px;background:#fff;overflow:hidden;"><div style="position:absolute;left:0;top:0;width:1362px;height:767px;transform:scale(0.14391);transform-origin:0 0;"><svg style="position:absolute;left:1002px;top:57.3px;" width="32.0" height="32.0" viewBox="0 0 32 32"><rect x="0" y="0" width="32" height="23" rx="1.5" fill="#111"/><rect x="4" y="13" width="6" height="6.5" fill="#fff"/><rect x="12.5" y="8.5" width="6" height="11" fill="#fff"/><rect x="21" y="4" width="6" height="15.5" fill="#fff"/><path d="M12.5 23 L9 31.5 M16 23 V31.5 M19.5 23 L23 31.5" stroke="#111" stroke-width="1.6"/></svg><div style="position:absolute;white-space:pre;left:1045.5px;top:60.81px;font-size:25.5px;line-height:25.5px;color:#111;font-weight:700;letter-spacing:-0.75px;">MagicSlides</div><div style="position:absolute;white-space:pre;left:304.5px;top:307.78px;font-size:45.5px;line-height:45.5px;color:#000;font-weight:700;transform:scaleX(0.746);transform-origin:0 0;-webkit-text-stroke:1.4px #000;">Professional Presentations in Seconds with AI</div><div style="position:absolute;white-space:pre;left:178.8px;top:404.72px;font-size:34px;line-height:34px;color:#111;font-weight:400;letter-spacing:0.1px;">Never start from a blank slide again.</div><div style="position:absolute;white-space:pre;left:179.3px;top:458.22px;font-size:34px;line-height:34px;color:#111;font-weight:400;">• Create presentation from text, YouTube, pdf</div><div style="position:absolute;white-space:pre;left:179.3px;top:495.42px;font-size:34px;line-height:34px;color:#111;font-weight:400;letter-spacing:-0.45px;">• No Credit Card Required</div><div style="position:absolute;white-space:pre;left:179.3px;top:531.32px;font-size:34px;line-height:34px;color:#111;font-weight:400;letter-spacing:-0.1px;">• No need to learn new tool</div></div></div>
<div style="position:absolute;white-space:pre;left:15.3px;top:20.86px;font-size:18px;line-height:18px;color:#C43E1C;font-weight:400;">1</div>
<svg style="position:absolute;left:0;top:0" width="40" height="64" viewBox="0 0 40 64"><polygon points="19.45,42.80 21.04,46.72 25.25,47.01 22.02,49.73 23.04,53.84 19.45,51.60 15.86,53.84 16.88,49.73 13.65,47.01 17.86,46.72" fill="#555"/><path d="M13 44.3 H14.9 M13 50.5 H14.9" stroke="#555" stroke-width="1.2"/></svg>
<div class="r" style="left:44px;top:161px;width:198px;height:112px;background:#C6C6C6;"></div>
<div class="r" style="left:45px;top:162px;width:196px;height:110px;background:#fff;overflow:hidden;"><div style="position:absolute;left:0;top:0;width:1362px;height:767px;transform:scale(0.14391);transform-origin:0 0;"><svg style="position:absolute;left:1002px;top:57.3px;" width="32.0" height="32.0" viewBox="0 0 32 32"><rect x="0" y="0" width="32" height="23" rx="1.5" fill="#111"/><rect x="4" y="13" width="6" height="6.5" fill="#fff"/><rect x="12.5" y="8.5" width="6" height="11" fill="#fff"/><rect x="21" y="4" width="6" height="15.5" fill="#fff"/><path d="M12.5 23 L9 31.5 M16 23 V31.5 M19.5 23 L23 31.5" stroke="#111" stroke-width="1.6"/></svg><div style="position:absolute;white-space:pre;left:1045.5px;top:60.81px;font-size:25.5px;line-height:25.5px;color:#111;font-weight:700;letter-spacing:-0.75px;">MagicSlides</div><div style="position:absolute;left:446px;top:232px;width:468px;height:309px;background:linear-gradient(180deg,#8F8A4C 0%,#A8904F 25%,#BC9A5C 50%,#B99459 100%);overflow:hidden;"><div style="position:absolute;left:310px;top:-20px;width:180px;height:170px;background:radial-gradient(closest-side,#6E8A48,rgba(110,138,72,0));"></div><div style="position:absolute;left:60px;top:10px;width:300px;height:110px;background:radial-gradient(closest-side,#8E9A55,rgba(142,154,85,0));"></div><svg style="position:absolute;left:0;top:0" width="468" height="309" viewBox="0 0 468 309"><path d="M60 180 Q70 150 120 148 L200 150 Q235 150 245 165 L255 185 Q240 220 215 225 L110 228 Q75 225 65 205 Z" fill="#7E4C24"/><path d="M85 210 L70 290 L82 292 L105 222 Z M200 215 L205 300 L216 300 L222 220 Z" fill="#6E4220"/><path d="M230 170 L238 120 L262 118 L262 150 L250 185 Z" fill="#7A4E2A"/><path d="M240 140 L248 118 L262 125 L255 150 Z" fill="#D8C8A8"/><path d="M240 118 L215 40 M256 118 L300 50" stroke="#7A5A3A" stroke-width="5"/><path d="M120 175 L135 172 M160 190 L172 186 M180 170 L192 168" stroke="#A07040" stroke-width="6"/></svg></div></div></div>
<div style="position:absolute;white-space:pre;left:15.3px;top:157.86px;font-size:18px;line-height:18px;color:#444444;font-weight:400;">2</div>
<svg style="position:absolute;left:0;top:0" width="40" height="201" viewBox="0 0 40 201"><polygon points="19.45,179.80 21.04,183.72 25.25,184.01 22.02,186.73 23.04,190.84 19.45,188.60 15.86,190.84 16.88,186.73 13.65,184.01 17.86,183.72" fill="#555"/><path d="M13 181.3 H14.9 M13 187.5 H14.9" stroke="#555" stroke-width="1.2"/></svg>
<div class="r" style="left:44px;top:298px;width:198px;height:112px;background:#C6C6C6;"></div>
<div class="r" style="left:45px;top:299px;width:196px;height:110px;background:#fff;overflow:hidden;"><div style="position:absolute;left:0;top:0;width:1362px;height:767px;transform:scale(0.14391);transform-origin:0 0;"><svg style="position:absolute;left:1002px;top:57.3px;" width="32.0" height="32.0" viewBox="0 0 32 32"><rect x="0" y="0" width="32" height="23" rx="1.5" fill="#111"/><rect x="4" y="13" width="6" height="6.5" fill="#fff"/><rect x="12.5" y="8.5" width="6" height="11" fill="#fff"/><rect x="21" y="4" width="6" height="15.5" fill="#fff"/><path d="M12.5 23 L9 31.5 M16 23 V31.5 M19.5 23 L23 31.5" stroke="#111" stroke-width="1.6"/></svg><div style="position:absolute;white-space:pre;left:1045.5px;top:60.81px;font-size:25.5px;line-height:25.5px;color:#111;font-weight:700;letter-spacing:-0.75px;">MagicSlides</div><div style="position:absolute;white-space:pre;left:307.9px;top:336.21px;font-size:47px;line-height:47px;color:#000;font-weight:700;transform:scaleX(0.717);transform-origin:0 0;">Professional Presentations in Seconds with AI</div><div style="position:absolute;white-space:pre;left:180.8px;top:402.14px;font-size:27px;line-height:27px;color:#666;font-weight:400;">Never start from a blank slide again.</div><div style="position:absolute;white-space:pre;left:180.8px;top:442.14px;font-size:27px;line-height:27px;color:#666;font-weight:400;">• Create presentation from text, YouTube, pdf</div><div style="position:absolute;white-space:pre;left:180.8px;top:470.14px;font-size:27px;line-height:27px;color:#666;font-weight:400;">• No Credit Card Required</div><div style="position:absolute;white-space:pre;left:180.8px;top:498.14px;font-size:27px;line-height:27px;color:#666;font-weight:400;">• No need to learn new tool</div><div style="position:absolute;white-space:pre;left:180.8px;top:526.14px;font-size:27px;line-height:27px;color:#666;font-weight:400;">It is the second one line of bullet.</div><div style="position:absolute;white-space:pre;left:225px;top:550.68px;font-size:24px;line-height:24px;color:#555;font-weight:400;">•This is the sub bullet here.</div><div style="position:absolute;white-space:pre;left:225px;top:575.68px;font-size:24px;line-height:24px;color:#555;font-weight:400;">•Example second line of bullet.</div></div></div>
<div style="position:absolute;white-space:pre;left:15.3px;top:294.86px;font-size:18px;line-height:18px;color:#444444;font-weight:400;">3</div>
<div class="r" style="left:44px;top:435px;width:198px;height:112px;background:#C6C6C6;"></div>
<div class="r" style="left:45px;top:436px;width:196px;height:110px;background:#fff;overflow:hidden;"><div style="position:absolute;left:0;top:0;width:1362px;height:767px;transform:scale(0.14391);transform-origin:0 0;"><svg style="position:absolute;left:1002px;top:57.3px;" width="32.0" height="32.0" viewBox="0 0 32 32"><rect x="0" y="0" width="32" height="23" rx="1.5" fill="#111"/><rect x="4" y="13" width="6" height="6.5" fill="#fff"/><rect x="12.5" y="8.5" width="6" height="11" fill="#fff"/><rect x="21" y="4" width="6" height="15.5" fill="#fff"/><path d="M12.5 23 L9 31.5 M16 23 V31.5 M19.5 23 L23 31.5" stroke="#111" stroke-width="1.6"/></svg><div style="position:absolute;white-space:pre;left:1045.5px;top:60.81px;font-size:25.5px;line-height:25.5px;color:#111;font-weight:700;letter-spacing:-0.75px;">MagicSlides</div><div style="position:absolute;white-space:pre;left:304.5px;top:336.18px;font-size:45.5px;line-height:45.5px;color:#000;font-weight:700;transform:scaleX(0.746);transform-origin:0 0;-webkit-text-stroke:1.4px #000;">Professional Presentations in Seconds with AI</div><div style="position:absolute;white-space:pre;left:178.8px;top:404.72px;font-size:34px;line-height:34px;color:#111;font-weight:400;letter-spacing:0.1px;">Never start from a blank slide again.</div><div style="position:absolute;white-space:pre;left:179.3px;top:458.22px;font-size:34px;line-height:34px;color:#111;font-weight:400;">• Create presentation from text, YouTube, pdf</div><div style="position:absolute;white-space:pre;left:179.3px;top:495.42px;font-size:34px;line-height:34px;color:#111;font-weight:400;letter-spacing:-0.45px;">• No Credit Card Required</div><div style="position:absolute;white-space:pre;left:179.3px;top:531.32px;font-size:34px;line-height:34px;color:#111;font-weight:400;">• No need to learn</div><div style="position:absolute;white-space:pre;left:461.5px;top:531.32px;font-size:34px;line-height:34px;color:#2F5FC8;font-weight:400;text-decoration:underline;">new tool</div></div></div>
<div style="position:absolute;white-space:pre;left:15.3px;top:431.86px;font-size:18px;line-height:18px;color:#444444;font-weight:400;">4</div>
<div class="r" style="left:44px;top:572px;width:198px;height:112px;background:#C6C6C6;"></div>
<div class="r" style="left:45px;top:573px;width:196px;height:110px;background:#fff;overflow:hidden;"><div style="position:absolute;left:0;top:0;width:1362px;height:767px;transform:scale(0.14391);transform-origin:0 0;"><svg style="position:absolute;left:1002px;top:57.3px;" width="32.0" height="32.0" viewBox="0 0 32 32"><rect x="0" y="0" width="32" height="23" rx="1.5" fill="#111"/><rect x="4" y="13" width="6" height="6.5" fill="#fff"/><rect x="12.5" y="8.5" width="6" height="11" fill="#fff"/><rect x="21" y="4" width="6" height="15.5" fill="#fff"/><path d="M12.5 23 L9 31.5 M16 23 V31.5 M19.5 23 L23 31.5" stroke="#111" stroke-width="1.6"/></svg><div style="position:absolute;white-space:pre;left:1045.5px;top:60.81px;font-size:25.5px;line-height:25.5px;color:#111;font-weight:700;letter-spacing:-0.75px;">MagicSlides</div><div style="position:absolute;left:420px;top:239px;width:503px;height:337px;background:linear-gradient(180deg,#7E7E7E 0%,#A8A8A8 25%,#CACACA 55%,#D2D2D2 80%,#C2C2C2 100%);overflow:hidden;"><svg style="position:absolute;left:0;top:0" width="503" height="337" viewBox="0 0 503 337"><path d="M65 190 Q75 160 125 162 L230 165 Q262 168 268 190 Q255 240 225 250 L120 254 Q80 250 70 225 Z" fill="#3C3C3C"/><path d="M90 235 L80 300 L94 302 L112 245 Z M215 245 L220 310 L232 310 L238 250 Z" fill="#4A4A4A"/></svg><div style="position:absolute;left:179px;top:35px;width:172px;height:150px;background:linear-gradient(180deg,#8C8A40,#A48040 55%,#B07A38);"><svg style="position:absolute;left:0;top:0" width="172" height="150" viewBox="0 0 172 150"><path d="M60 150 L80 105 L105 105 L110 150 Z" fill="#6E4522"/><path d="M85 108 L50 20 M100 108 L140 25" stroke="#6A4A2A" stroke-width="5"/></svg></div></div></div></div>
<div style="position:absolute;white-space:pre;left:15.3px;top:568.86px;font-size:18px;line-height:18px;color:#444444;font-weight:400;">5</div>
<div class="r" style="left:44px;top:709px;width:198px;height:112px;background:#C6C6C6;"></div>
<div class="r" style="left:45px;top:710px;width:196px;height:110px;background:#fff;overflow:hidden;"><div style="position:absolute;left:0;top:0;width:1362px;height:767px;transform:scale(0.14391);transform-origin:0 0;"><svg style="position:absolute;left:1002px;top:57.3px;" width="32.0" height="32.0" viewBox="0 0 32 32"><rect x="0" y="0" width="32" height="23" rx="1.5" fill="#111"/><rect x="4" y="13" width="6" height="6.5" fill="#fff"/><rect x="12.5" y="8.5" width="6" height="11" fill="#fff"/><rect x="21" y="4" width="6" height="15.5" fill="#fff"/><path d="M12.5 23 L9 31.5 M16 23 V31.5 M19.5 23 L23 31.5" stroke="#111" stroke-width="1.6"/></svg><div style="position:absolute;white-space:pre;left:1045.5px;top:60.81px;font-size:25.5px;line-height:25.5px;color:#111;font-weight:700;letter-spacing:-0.75px;">MagicSlides</div><svg style="position:absolute;left:0;top:0" width="1362" height="767" viewBox="0 0 1362 767"><path d="M650 142 L503 371 H797 Z" fill="#4472C4" stroke="#2F528F" stroke-width="5"/><rect x="503" y="371" width="294" height="420" fill="#4472C4" stroke="#2F528F" stroke-width="5"/></svg></div></div>
<div style="position:absolute;white-space:pre;left:15.3px;top:705.86px;font-size:18px;line-height:18px;color:#444444;font-weight:400;">6</div>
</div>
<div class="r" style="left:267px;top:196px;width:19px;height:797px;background:#F3F3F3;"></div>
<div class="r" style="left:267px;top:196px;width:19px;height:495px;background:#FFFFFF;box-sizing:border-box;border:1.5px solid #8C8C8C;"></div>
<div class="r" style="left:267px;top:972.5px;width:19px;height:18.5px;background:#FFFFFF;box-sizing:border-box;border:1px solid #8C8C8C;"></div>
<svg class="s" style="left:271px;top:977px;" width="11" height="8" viewBox="0 0 11 8"><path d="M1 1.5 H10 L5.5 6.5 Z" fill="#222"/></svg>
<div class="r" style="left:290px;top:196px;width:1px;height:797px;background:#BDBDBD;"></div>
<div class="r" style="left:415px;top:208px;width:1362px;height:767px;background:#fff;box-sizing:border-box;border:1px solid #C6C6C6;overflow:hidden;"><div style="position:absolute;left:1px;top:1px;width:1362px;height:767px;"><svg style="position:absolute;left:1002px;top:57.3px;" width="32.0" height="32.0" viewBox="0 0 32 32"><rect x="0" y="0" width="32" height="23" rx="1.5" fill="#111"/><rect x="4" y="13" width="6" height="6.5" fill="#fff"/><rect x="12.5" y="8.5" width="6" height="11" fill="#fff"/><rect x="21" y="4" width="6" height="15.5" fill="#fff"/><path d="M12.5 23 L9 31.5 M16 23 V31.5 M19.5 23 L23 31.5" stroke="#111" stroke-width="1.6"/></svg><div style="position:absolute;white-space:pre;left:1045.5px;top:60.81px;font-size:25.5px;line-height:25.5px;color:#111;font-weight:700;letter-spacing:-0.75px;">MagicSlides</div><div style="position:absolute;white-space:pre;left:304.5px;top:307.78px;font-size:45.5px;line-height:45.5px;color:#000;font-weight:700;transform:scaleX(0.746);transform-origin:0 0;-webkit-text-stroke:1.4px #000;">Professional Presentations in Seconds with AI</div><div style="position:absolute;white-space:pre;left:178.8px;top:404.72px;font-size:34px;line-height:34px;color:#111;font-weight:400;letter-spacing:0.1px;">Never start from a blank slide again.</div><div style="position:absolute;white-space:pre;left:179.3px;top:458.22px;font-size:34px;line-height:34px;color:#111;font-weight:400;">• Create presentation from text, YouTube, pdf</div><div style="position:absolute;white-space:pre;left:179.3px;top:495.42px;font-size:34px;line-height:34px;color:#111;font-weight:400;letter-spacing:-0.45px;">• No Credit Card Required</div><div style="position:absolute;white-space:pre;left:179.3px;top:531.32px;font-size:34px;line-height:34px;color:#111;font-weight:400;letter-spacing:-0.1px;">• No need to learn new tool</div></div></div>
<div class="r" style="left:293px;top:990px;width:1625px;height:1px;background:#C6C6C6;"></div>
<div class="r" style="left:1900px;top:196px;width:18px;height:794px;background:#F3F3F3;"></div>
<div class="r" style="left:1900px;top:198.5px;width:18px;height:19px;background:#FFFFFF;box-sizing:border-box;border:1px solid #8C8C8C;border-right:none;"></div>
<svg class="s" style="left:1904px;top:203px;" width="11" height="8" viewBox="0 0 11 8"><path d="M1 6.5 H10 L5.5 1.5 Z" fill="#222"/></svg>
<div class="r" style="left:1900px;top:217px;width:18px;height:75px;background:#FFFFFF;box-sizing:border-box;border:1.5px solid #8C8C8C;border-right:none;"></div>
<div class="r" style="left:1900px;top:903.4px;width:18px;height:18.5px;background:#FFFFFF;box-sizing:border-box;border:1px solid #8C8C8C;border-right:none;"></div>
<svg class="s" style="left:1904px;top:908px;" width="11" height="8" viewBox="0 0 11 8"><path d="M1 1.5 H10 L5.5 6.5 Z" fill="#222"/></svg>
<div class="r" style="left:1900px;top:922px;width:18px;height:68px;background:#E6E6E6;"></div>
<svg class="s" style="left:1902px;top:925px;" width="14" height="38" viewBox="0 0 14 38"><path d="M7 1 L13 8.5 H10.5 L13.5 15 H0.5 L3.5 8.5 H1 Z" fill="#6B6B6B"/><path d="M0.5 22 H13.5 L10.5 28.5 H13 L7 37 L1 28.5 H3.5 Z" fill="#6B6B6B"/></svg>
<div class="r" style="left:0px;top:993px;width:1918px;height:23px;background:#F3F3F3;"></div>
<div class="r" style="left:0px;top:993px;width:1918px;height:1px;background:#C6C6C6;"></div>
<div class="t" style="font-size:13px;line-height:13px;color:#444444;font-weight:400;font-family:'Liberation Sans', sans-serif;top:1000.60px;left:15px;">Slide 1 of 9</div>
<svg class="s" style="left:100px;top:994px;" width="30" height="22" viewBox="0 0 30 22">
<path d="M11.7 5.8 H5.9 V17.3 H11.7 M15.4 5.8 H21.5 V7 M21.5 13 V17.3 H15.4" fill="none" stroke="#666" stroke-width="1.1"/>
<path d="M13.4 6.2 V19.3" stroke="#666" stroke-width="1"/>
<path d="M12.2 6 H14.6 L13.4 7.3 Z M12 18.3 H14.8 L13.4 20 Z" fill="#666"/>
<path d="M16.3 15.2 L21.5 10 L23 11.5 L17.8 16.7 L15.9 17.2 Z" fill="none" stroke="#666" stroke-width="1"/>
<path d="M21.6 8.2 L23 9.6 L23.8 9.2 L22.2 7.6 Z" fill="#666"/>
</svg>
<div class="t" style="font-size:13px;line-height:13px;color:#444444;font-weight:400;font-family:'Liberation Sans', sans-serif;top:1000.60px;left:144px;letter-spacing:-0.2px;">English (India)</div>
<svg class="s" style="left:240px;top:994px;" width="30" height="22" viewBox="0 0 30 22">
<path d="M11.6 6.3 A7.1 7.1 0 0 0 12.6 20.2" fill="none" stroke="#555" stroke-width="1.2" stroke-dasharray="2.2 1.2"/>
<path d="M13.4 5.2 V12" stroke="#555" stroke-width="1.1"/>
<path d="M11 11.3 H15.8 L13.4 13.9 Z" fill="#555"/>
<path d="M16.9 11.3 H20" stroke="#555" stroke-width="1.1"/>
<path d="M19.1 9.1 L21.9 11.3 L19.1 13.9 Z" fill="#555"/>
<path d="M15.6 14.7 L22 21.5 M24.3 14.9 L15.3 22" stroke="#444" stroke-width="1.9"/>
</svg>
<div class="t" style="font-size:13px;line-height:13px;color:#333;font-weight:700;font-family:'Liberation Sans', sans-serif;top:1000.60px;left:268.4px;letter-spacing:-0.2px;">Accessibility: Investigate</div>
<svg class="s" style="left:1288px;top:998px;" width="16" height="16" viewBox="0 0 16 16">
<path d="M8 1 L12 5 H4 Z" fill="#444444"/>
<path d="M1 8 H15 M1 11 H15 M1 14 H12" stroke="#444444" stroke-width="1"/>
</svg>
<div class="t" style="font-size:13px;line-height:13px;color:#444444;font-weight:400;font-family:'Liberation Sans', sans-serif;top:1000.60px;left:1308px;">Notes</div>
<svg class="s" style="left:1367px;top:998px;" width="20" height="18" viewBox="0 0 20 18"><path d="M2 1 H17.5 Q19 1 19 2.5 V10.5 Q19 12 17.5 12 H9 L5 16 V12 H2 Q0.5 12 0.5 10.5 V2.5 Q0.5 1 2 1 Z" fill="#595959"/></svg>
<div class="t" style="font-size:13px;line-height:13px;color:#444444;font-weight:400;font-family:'Liberation Sans', sans-serif;top:1000.60px;left:1389.5px;">Comments</div>
<div class="r" style="left:1475px;top:994px;width:50px;height:22px;background:#C9C9C9;"></div>
<svg class="s" style="left:1490px;top:999px;" width="19" height="17" viewBox="0 0 19 17">
<rect x="0.5" y="0.5" width="17" height="15" fill="none" stroke="#444444" stroke-width="1"/>
<path d="M3.5 0.5 V15.5 M3.5 12.5 H17.5" stroke="#444444" stroke-width="1"/>
<rect x="7" y="3.5" width="7" height="5.5" fill="none" stroke="#444444" stroke-width="1"/>
</svg>
<svg class="s" style="left:1540px;top:999px;" width="18" height="17" viewBox="0 0 18 17">
<rect x="0.5" y="0.5" width="6.5" height="5.5" fill="none" stroke="#444444" stroke-width="1"/>
<rect x="10" y="0.5" width="6.5" height="5.5" fill="none" stroke="#444444" stroke-width="1"/>
<rect x="0.5" y="9.5" width="6.5" height="5.5" fill="none" stroke="#444444" stroke-width="1"/>
<rect x="10" y="9.5" width="6.5" height="5.5" fill="none" stroke="#444444" stroke-width="1"/>
</svg>
<svg class="s" style="left:1590px;top:999px;" width="19" height="17" viewBox="0 0 19 17">
<path d="M0.5 1.5 H8.5 L9 2 L9.5 1.5 H17.5 V14.5 H9.5 L9 15.5 L8.5 14.5 H0.5 Z" fill="none" stroke="#444444" stroke-width="1"/>
<path d="M9 2 V15 M2.5 4.5 H7 M2.5 7 H7 M2.5 9.5 H7 M2.5 12 H7 M11 4.5 H15.5 M11 7 H15.5 M11 9.5 H15.5 M11 12 H15.5" stroke="#444444" stroke-width="0.9"/>
</svg>
<svg class="s" style="left:1640px;top:998px;" width="20" height="18" viewBox="0 0 20 18">
<path d="M0.5 1 H19.5" stroke="#444444" stroke-width="1.6"/>
<path d="M2.5 1.5 V10.5 H17.5 V1.5" fill="none" stroke="#444444" stroke-width="1"/>
<path d="M6.5 5 H13.5 M10 10.5 V16.5 M6.5 16.5 H13.5" stroke="#444444" stroke-width="1"/>
</svg>
<div class="r" style="left:1682px;top:1006.5px;width:9px;height:1.3px;background:#444444;"></div>
<div class="r" style="left:1697px;top:1006.8px;width:126px;height:1.2px;background:#555;"></div>
<div class="r" style="left:1748px;top:1000px;width:6px;height:14px;background:#444;"></div>
<div class="r" style="left:1760px;top:1003.5px;width:1px;height:8px;background:#444;"></div>
<svg class="s" style="left:1828px;top:1001px;" width="12" height="12" viewBox="0 0 12 12"><path d="M0.5 6 H11.5 M6 0.5 V11.5" stroke="#444444" stroke-width="1.2"/></svg>
<div class="t" style="font-size:13px;line-height:13px;color:#444444;font-weight:400;font-family:'Liberation Sans', sans-serif;top:1000.60px;left:1854px;">85%</div>
<svg class="s" style="left:1898px;top:1000px;" width="14" height="14" viewBox="0 0 14 14">
<rect x="0.5" y="0.5" width="12.5" height="12.5" fill="none" stroke="#555" stroke-width="1"/>
<path d="M6.75 2.5 V5 M6.75 8.5 V11 M2.5 6.75 H5 M8.5 6.75 H11 M5.5 3.5 L6.75 2.3 L8 3.5 M5.5 10 L6.75 11.2 L8 10 M3.5 5.5 L2.3 6.75 L3.5 8 M10 5.5 L11.2 6.75 L10 8" fill="none" stroke="#555" stroke-width="0.8"/>
</svg>
<div class="r" style="left:154px;top:171.8px;width:178.5px;height:96.5px;background:#FFFFFF;box-sizing:border-box;border:1px solid #A8A8A8;border-radius:4px 4px 0 0;box-shadow:2px 4px 10px rgba(0,0,0,0.22);"></div>
<div class="r" style="left:156px;top:174.3px;width:175.5px;height:29.4px;background:#E8E8E8;border-radius:2px 2px 0 0;"></div>
<div class="t" style="font-size:14.5px;line-height:14.5px;color:#262626;font-weight:700;font-family:'Liberation Sans', sans-serif;top:182.83px;left:166.7px;">Insert Picture From</div>
<div class="r" style="left:156px;top:207.1px;width:175.5px;height:29.4px;background:#D3D3D3;"></div>
<div class="t" style="font-size:14px;line-height:14px;color:#262626;font-weight:400;font-family:'Liberation Sans', sans-serif;top:216.05px;left:195.5px;letter-spacing:-0.15px;">This Device...</div>
<div class="r" style="left:223.5px;top:229.6px;width:10px;height:1.1px;background:#262626;"></div>
<div class="t" style="font-size:14px;line-height:14px;color:#262626;font-weight:400;font-family:'Liberation Sans', sans-serif;top:245.95px;left:195.5px;">Online Pictures...</div>
<div class="r" style="left:195.5px;top:259.5px;width:11px;height:1.1px;background:#262626;"></div>
<svg class="s" style="left:160.8px;top:212px;" width="20" height="20" viewBox="0 0 20 20"><rect x="0.5" y="0.5" width="14.5" height="14" fill="#fff" stroke="#666" stroke-width="1"/><circle cx="10" cy="4" r="1.5" fill="#EDAE5A"/><path d="M1 14.5 V9 L4.5 5.5 L9 10 V14.5 Z" fill="#B9CDE5"/><rect x="7.5" y="8.5" width="10.5" height="7" fill="#fff" stroke="#3E78BE" stroke-width="1.3"/><path d="M12.75 15.5 V18 M9.5 18.5 H16" stroke="#3E78BE" stroke-width="1.3"/></svg>
<svg class="s" style="left:160.8px;top:241.8px;" width="20" height="20" viewBox="0 0 20 20"><rect x="0.5" y="0.5" width="14.5" height="14" fill="#fff" stroke="#666" stroke-width="1"/><circle cx="10" cy="4" r="1.5" fill="#EDAE5A"/><path d="M1 14.5 V9 L4.5 5.5 L9 10 V14.5 Z" fill="#B9CDE5"/><circle cx="13.5" cy="13.5" r="5.5" fill="#fff" stroke="#3E78BE" stroke-width="1.1"/><path d="M8 13.5 H19 M13.5 8 V19 M9.5 11 H17.5 M9.5 16 H17.5" stroke="#3E78BE" stroke-width="0.9"/><ellipse cx="13.5" cy="13.5" rx="2.3" ry="5.5" fill="none" stroke="#3E78BE" stroke-width="0.9"/></svg>
<div class="r" style="left:310.3px;top:242.1px;width:236.5px;height:132.5px;background:#FFFFFF;box-sizing:border-box;border:1px solid #8E8E8E;border-radius:4px;box-shadow:2px 7px 16px rgba(0,0,0,0.22);"></div>
<div class="t" style="font-size:12.5px;line-height:12.5px;color:#444444;font-weight:700;font-family:'Liberation Sans', sans-serif;top:253.22px;left:324.4px;">Pictures</div>
<div class="t" style="font-size:13px;line-height:13px;color:#555555;font-weight:400;font-family:'Liberation Sans', sans-serif;top:281.90px;left:324.4px;letter-spacing:0.17px;">Insert pictures from your computer</div>
<div class="t" style="font-size:13px;line-height:13px;color:#555555;font-weight:400;font-family:'Liberation Sans', sans-serif;top:298.90px;left:324.4px;letter-spacing:0.17px;">or from other computers that</div>
<div class="t" style="font-size:13px;line-height:13px;color:#555555;font-weight:400;font-family:'Liberation Sans', sans-serif;top:315.80px;left:324.4px;letter-spacing:0.17px;">you&#x27;re connected to.</div>
<div class="r" style="left:316px;top:337px;width:225px;height:1px;background:#DCDCDC;"></div>
<svg class="s" style="left:324px;top:347.8px;" width="18" height="18" viewBox="0 0 18 18"><circle cx="9" cy="9" r="9" fill="#3F72AF"/><text x="9" y="15.3" text-anchor="middle" font-family="Liberation Sans" font-weight="700" font-size="16.5" fill="#fff">?</text></svg>
<div class="t" style="font-size:13px;line-height:13px;color:#2B5797;font-weight:700;font-family:'Liberation Sans', sans-serif;top:350.70px;left:352.4px;letter-spacing:0.2px;">Tell me more</div>
</body></html>
